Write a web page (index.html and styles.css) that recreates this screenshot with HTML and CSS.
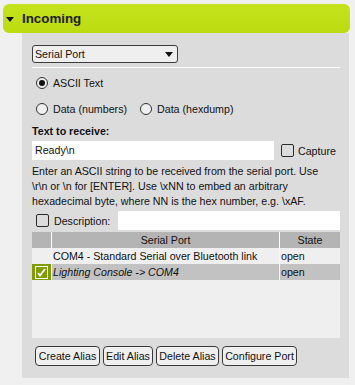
FILE: index.html
```html
<!DOCTYPE html>
<html>
<head>
<meta charset="utf-8">
<link rel="stylesheet" href="styles.css">
</head>
<body>
<div class="group">
  <div class="group-head">
    <span class="tri"></span>
    <span class="group-title">Incoming</span>
  </div>
  <div class="panel">
    <div class="select"><span>Serial Port</span><span class="sel-arrow"></span></div>
    <div class="rule"></div>
    <div class="radio-row first">
      <span class="opt"><span class="radio on"></span><span>ASCII Text</span></span>
    </div>
    <div class="radio-row second">
      <span class="opt"><span class="radio"></span><span>Data (numbers)</span></span>
      <span class="opt opt-2"><span class="radio"></span><span>Data (hexdump)</span></span>
    </div>
    <div class="field-label">Text to receive:</div>
    <div class="input-row">
      <div class="text-input main-input">Ready\n</div>
      <span class="check cap-check"></span>
      <span class="cap-label">Capture</span>
    </div>
    <div class="help">Enter an ASCII string to be received from the serial port. Use<br>\r\n or \n for [ENTER]. Use \xNN to embed an arbitrary<br>hexadecimal byte, where NN is the hex number, e.g. \xAF.</div>
    <div class="desc-row">
      <span class="check desc-check"></span>
      <span class="desc-label">Description:</span>
      <div class="text-input desc-input"></div>
    </div>
    <div class="table">
      <div class="tr thead">
        <div class="td c1"></div>
        <div class="td c2 center">Serial Port</div>
        <div class="td c3 center">State</div>
      </div>
      <div class="tr">
        <div class="td c1"></div>
        <div class="td c2">COM4 - Standard Serial over Bluetooth link</div>
        <div class="td c3">open</div>
      </div>
      <div class="tr sel">
        <div class="td c1 chk">
          <svg width="19" height="16" viewBox="0 0 19 16"><rect x="0" y="0" width="19" height="16" fill="#7d9d00"/><rect x="3.5" y="2.5" width="12" height="12" fill="none" stroke="#ffffff" stroke-width="1"/><path d="M6 9 L8 11.5 L13 5" fill="none" stroke="#ffffff" stroke-width="1.8"/></svg>
        </div>
        <div class="td c2">Lighting Console -&gt; COM4</div>
        <div class="td c3">open</div>
      </div>
    </div>
    <div class="buttons">
      <div class="btn b1">Create Alias</div>
      <div class="btn b2">Edit Alias</div>
      <div class="btn b3">Delete Alias</div>
      <div class="btn b4">Configure Port</div>
    </div>
  </div>
</div>
</body>
</html>
```

FILE: styles.css
```css
* { box-sizing: border-box; }
html, body { margin: 0; padding: 0; }
body {
  background: #f0f0f0;
  font-family: "Liberation Sans", Arial, sans-serif;
  font-size: 10.67px;
  color: #111;
  width: 355px;
  height: 385px;
  overflow: hidden;
}
.group { padding: 4px 5px 0 3px; }
.group-head {
  height: 29px;
  border-radius: 6px;
  background: linear-gradient(#c4e31c, #bcdc10);
  display: flex;
  align-items: center;
  padding-left: 3px;
}
.tri {
  width: 0; height: 0;
  border-left: 4.5px solid transparent;
  border-right: 4.5px solid transparent;
  border-top: 5px solid #111;
  margin-right: 8px;
  margin-top: 1px;
}
.group-title {
  font-size: 13.33px;
  font-weight: bold;
  color: #1c1c00;
}
.panel {
  margin: 0 1px 0 19px;
  background: #dcdcdc;
  padding: 12px 9px 12px 10px;
  display: flex;
  flex-direction: column;
}
.select {
  width: 146px;
  height: 18px;
  border: 1px solid #3c3c3c;
  border-radius: 3px;
  background: #efefef;
  display: flex;
  align-items: center;
  justify-content: space-between;
  padding: 0 3px 0 2px;
}
.sel-arrow {
  width: 0; height: 0;
  border-left: 4.5px solid transparent;
  border-right: 4.5px solid transparent;
  border-top: 5px solid #111;
  margin-right: 1px;
}
.rule { height: 1px; background: #fff; margin-top: 4px; }
.radio-row { display: flex; align-items: center; height: 16px; }
.radio-row.first { margin-top: 7px; }
.radio-row.second { margin-top: 10px; }
.opt { display: flex; align-items: center; }
.opt-2 { margin-left: 13px; }
.radio {
  width: 12px; height: 12px;
  border: 1px solid #333;
  border-radius: 50%;
  background: #efefef;
  margin: 0 5px 0 4px;
  display: flex;
  align-items: center;
  justify-content: center;
}
.opt-2 .radio { margin-left: 0; }
.radio.on::after {
  content: "";
  width: 6px; height: 6px;
  border-radius: 50%;
  background: #111;
}
.field-label {
  font-weight: bold;
  line-height: 14px;
  margin-top: 7px;
}
.input-row { display: flex; align-items: center; margin-top: 3px; }
.text-input {
  background: #fff;
  height: 19px;
  line-height: 19px;
  padding-left: 3px;
}
.main-input { width: 242px; }
.check {
  width: 13px; height: 13px;
  border: 1px solid #2a2a2a;
  border-radius: 2px;
}
.cap-check { margin-left: 7px; }
.cap-label { margin-left: 4px; }
.help { margin-top: 4px; line-height: 15px; white-space: nowrap; }
.desc-row { display: flex; align-items: center; margin-top: 2px; }
.desc-check { margin-left: 4px; }
.desc-label { margin-left: 5px; }
.desc-input { flex: 1; margin-left: 8px; }
.table {
  margin-top: 2px;
  height: 106px;
  background: #efefef;
  width: 308px;
}
.tr { display: flex; height: 16px; }
.td {
  height: 16px;
  line-height: 16px;
  border-right: 1px solid #f4f4f4;
  padding-left: 1px;
  white-space: nowrap;
  overflow: hidden;
}
.c1 { width: 20px; padding: 0; }
.c2 { width: 228px; }
.c3 { width: 60px; border-right: none; }
.center { text-align: center; padding-left: 0; }
.thead { background: #b4b4b4; }
.thead .td { border-right-color: #ffffff; }
.tr.sel { background: #c2c2c2; }
.tr.sel .c2 { font-style: italic; }
.chk svg { display: block; }
.buttons { display: flex; gap: 3px; margin-top: 8px; padding-left: 3px; }
.btn {
  height: 20px;
  line-height: 18px;
  border: 1px solid #3a3a3a;
  border-radius: 4px;
  background: #efefef;
  text-align: center;
  white-space: nowrap;
}
.b1 { width: 65px; }
.b2 { width: 50px; }
.b3 { width: 63px; }
.b4 { width: 75px; }
```
